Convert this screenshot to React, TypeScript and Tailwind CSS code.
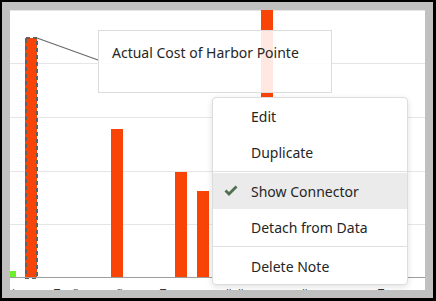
import React from "react";

const font = { fontFamily: '"Noto Sans", "Open Sans", sans-serif' };

function Chart() {
  const grid = [0.5, 53.5, 107.5, 161.5, 214.5];
  const bars = [
    { x: 101, y: 119 },
    { x: 165, y: 162 },
    { x: 187, y: 181 },
    { x: 251, y: 0 },
  ];
  const labels = [
    { x: 0, t: "l", fill: "#555" },
    { x: 22, t: "a", fill: "#888" },
    { x: 42, t: "Tu", fill: "#333" },
    { x: 60, t: "fl", fill: "#666" },
    { x: 85, t: "a", fill: "#999" },
    { x: 104, t: "fl", fill: "#666" },
    { x: 130, t: "o", fill: "#999" },
    { x: 148, t: "Tu", fill: "#333" },
    { x: 172, t: "a", fill: "#999" },
    { x: 194, t: "a", fill: "#999" },
    { x: 214, t: "lb", fill: "#444" },
    { x: 226, t: "lb", fill: "#444" },
    { x: 250, t: "a", fill: "#999" },
    { x: 276, t: "e", fill: "#999" },
    { x: 290, t: "lb", fill: "#444" },
    { x: 314, t: "a", fill: "#999" },
    { x: 330, t: "a", fill: "#999" },
    { x: 352, t: "o", fill: "#999" },
    { x: 366, t: "T", fill: "#333" },
    { x: 400, t: "e", fill: "#999" },
  ];
  return (
    <svg width={415} height={280} className="block">
      {grid.map((y) => (
        <line key={y} x1={0} x2={415} y1={y} y2={y} stroke="#e6e6e6" strokeWidth={1} />
      ))}
      <rect x={0} y={261} width={6} height={7} fill="#6cf02a" />
      <rect x={15} y={28} width={12} height={240} fill="#f94408" />
      {bars.map((b) => (
        <rect key={b.x} x={b.x} y={b.y} width={12} height={268 - b.y} fill="#f94408" />
      ))}
      <rect
        x={16}
        y={28}
        width={11}
        height={240}
        fill="none"
        stroke="#606060"
        strokeWidth={2}
        strokeDasharray="4 3"
      />
      <line x1={27} y1={28} x2={88} y2={50} stroke="#6b6b6b" strokeWidth={1.3} />
      <line x1={0} x2={415} y1={267.5} y2={267.5} stroke="#9e9e9e" strokeWidth={1.2} />
      {labels.map((l, i) => (
        <text
          key={i}
          x={l.x + 2}
          y={287}
          fontSize={11}
          fill={l.fill}
          style={font}
        >
          {l.t}
        </text>
      ))}
    </svg>
  );
}

function Check() {
  return (
    <svg width={14} height={11} viewBox="0 0 14 11" className="block">
      <path
        d="M1.5 5.5 L5 9 L12.5 1.5"
        fill="none"
        stroke="#4f6e52"
        strokeWidth={2.8}
        strokeLinejoin="miter"
      />
    </svg>
  );
}

function Item({ label, checked, active }: { label: string; checked?: boolean; active?: boolean }) {
  return (
    <div
      className={`relative flex h-[36px] items-center pl-[38px] text-[14px] text-[#262626] ${
        active ? "bg-[#ebebeb]" : ""
      }`}
    >
      {checked && (
        <span className="absolute left-[11px] top-[12px]">
          <Check />
        </span>
      )}
      {label}
    </div>
  );
}

function Sep() {
  return (
    <div className="py-[1px]">
      <div className="h-px bg-[#e0e0e0]" />
    </div>
  );
}

export default function App() {
  return (
    <div
      className="h-[301px] w-[436px] border-l-2 border-t-2 border-r-[3px] border-b-[3px] border-black"
      style={font}
    >
      <div className="h-full w-full border-8 border-[#c0c0c0]">
        <div className="relative h-full w-full overflow-hidden bg-white">
          <Chart />
          <div className="absolute left-[88px] top-[20px] h-[63px] w-[234px] border border-[#dcdcdc] bg-[rgba(255,255,255,0.88)] pl-[13px] pt-[12px] text-[14px] leading-[19px] text-[#262626]">
            Actual Cost of Harbor Pointe
          </div>
          <div className="absolute left-[202px] top-[87px] w-[196px] rounded-[4px] border border-[#dddddd] bg-white shadow-[0_2px_6px_rgba(0,0,0,0.12)]">
            <Item label="Edit" />
            <Item label="Duplicate" />
            <Sep />
            <Item label="Show Connector" checked active />
            <Item label="Detach from Data" />
            <Sep />
            <Item label="Delete Note" />
          </div>
        </div>
      </div>
    </div>
  );
}
